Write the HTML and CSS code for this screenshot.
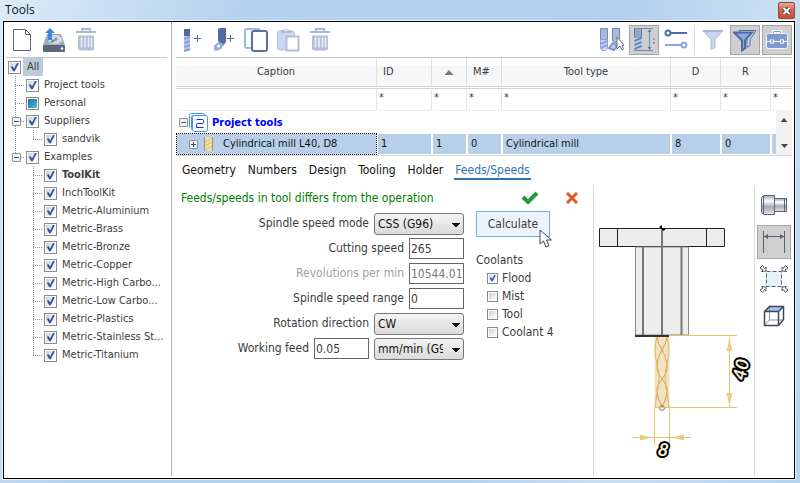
FILE: index.html
```html
<!DOCTYPE html>
<html lang="en">
<head>
    <meta charset="UTF-8">
    <title>Tools</title>
    <link rel="stylesheet" href="styles.css">
</head>
<body>
    <svg width="0" height="0" class="defs" aria-hidden="true">
        <defs>
            <symbol id="trash" viewBox="0 0 24 24">
                <path d="M8 3V1h8v2M2 4h20" fill="none" stroke="#a9b9d6" stroke-width="2"/>
                <path d="M4 7.500h16v13q0 2-2 2H6q-2 0-2-2z" fill="#b2bfda"/>
                <path d="M7.500 9.500v10M11 9.500v10M14.500 9.500v10M17.500 9.500v10" stroke="#e9eef7" stroke-width="1.500"/>
            </symbol>
        </defs>
    </svg>
    <div class="window">
        <div class="title">
            <h1>Tools</h1>
            <button class="close" aria-label="Close"><svg width="9" height="8" viewBox="0 0 9 8"><path d="M1.500 1l6 6M7.500 1l-6 6" stroke="#5b3a3a" stroke-width="4"/><path d="M1.500 1l6 6M7.500 1l-6 6" stroke="#fff" stroke-width="2"/></svg></button>
        </div>
        <div class="client">
            <div class="left">
                <div class="toolbar">
                    <button class="tb" aria-label="New"><svg width="24" height="24" viewBox="0 0 24 24"><path d="M3.500 1.500h12l5 5v16h-17z" fill="#fff" stroke="#5d6577"/><path d="M15.500 1.500v5h5" fill="none" stroke="#5d6577"/></svg></button>
                    <button class="tb" aria-label="Load from disk"><svg width="24" height="24" viewBox="0 0 24 24"><path d="M5 6h14l4 11H1z" fill="#a5acb8"/><ellipse cx="13" cy="11.500" rx="7" ry="4.500" fill="#d5dbe6"/><path d="M9 14l4-2" stroke="#7b8595" stroke-width="2"/><circle cx="14" cy="11" r="1.500" fill="#8c95a5"/><rect x="1" y="17" width="22" height="7" rx="1" fill="#59677f"/><circle cx="20" cy="20.500" r="1.300" fill="#fff"/><path d="M8 0l5 5h-3v7H6V5H3z" fill="#3d86e0"/></svg></button>
                    <button class="tb" aria-label="Delete"><svg width="24" height="24"><use href="#trash"/></svg></button>
                </div>
                <ul class="tree">
                    <li>
                        <label class="row root"><input type="checkbox" checked><span>All</span></label>
                        <ul>
                            <li><label class="row"><input type="checkbox" checked><span>Project tools</span></label></li>
                            <li><label class="row"><input type="checkbox" class="part"><span>Personal</span></label></li>
                            <li>
                                <div class="row open"><button class="exp" aria-label="Collapse Suppliers"></button><label><input type="checkbox" checked><span>Suppliers</span></label></div>
                                <ul>
                                    <li><label class="row"><input type="checkbox" checked><span>sandvik</span></label></li>
                                </ul>
                            </li>
                            <li>
                                <div class="row open"><button class="exp" aria-label="Collapse Examples"></button><label><input type="checkbox" checked><span>Examples</span></label></div>
                                <ul>
                                    <li><label class="row"><input type="checkbox" checked><b>ToolKit</b></label></li>
                                    <li><label class="row"><input type="checkbox" checked><span>InchToolKit</span></label></li>
                                    <li><label class="row"><input type="checkbox" checked><span>Metric-Aluminium</span></label></li>
                                    <li><label class="row"><input type="checkbox" checked><span>Metric-Brass</span></label></li>
                                    <li><label class="row"><input type="checkbox" checked><span>Metric-Bronze</span></label></li>
                                    <li><label class="row"><input type="checkbox" checked><span>Metric-Copper</span></label></li>
                                    <li><label class="row"><input type="checkbox" checked><span>Metric-High Carbo...</span></label></li>
                                    <li><label class="row"><input type="checkbox" checked><span>Metric-Low Carbo...</span></label></li>
                                    <li><label class="row"><input type="checkbox" checked><span>Metric-Plastics</span></label></li>
                                    <li><label class="row"><input type="checkbox" checked><span>Metric-Stainless St...</span></label></li>
                                    <li><label class="row"><input type="checkbox" checked><span>Metric-Titanium</span></label></li>
                                </ul>
                            </li>
                        </ul>
                    </li>
                </ul>
            </div>
            <div class="right">
                <div class="toolbar">
                    <button class="tb" aria-label="Add mill"><svg width="24" height="24" viewBox="0 0 24 24"><path d="M4 1h6v7H4z" fill="#4f6c9c"/><path d="M4 8h6v14l-1 1H5l-1-1z" fill="#c3cff0"/><path d="M4 11l6-2M4 15l6-2M4 19l6-2M4 23l6-2" stroke="#8ea6df" stroke-width="2.500"/><path d="M14 10.500h7M17.500 7v7" stroke="#4f6c9c"/></svg></button>
                    <button class="tb" aria-label="Add turning tool"><svg width="24" height="24" viewBox="0 0 24 24"><path d="M6 1l2-1h6v14l-3 4-5-5z" fill="#4f6c9c"/><path d="M2 18l4-4 6 2-3 5-5 2-2-1z" fill="#93a9e2"/><circle cx="6.500" cy="18" r="1.500" fill="#fff"/><path d="M15 10.500h7M18.500 7v7" stroke="#4f6c9c"/></svg></button>
                    <button class="tb" aria-label="Copy"><svg width="24" height="24" viewBox="0 0 24 24"><rect x="1" y="1" width="15" height="19" rx="2" fill="#fff" stroke="#9db5ea" stroke-width="2"/><rect x="8" y="3" width="15" height="20" rx="2" fill="#fff" stroke="#5672a3" stroke-width="2"/></svg></button>
                    <button class="tb" aria-label="Paste"><svg width="24" height="24" viewBox="0 0 24 24"><rect x="1.500" y="3" width="17" height="19" rx="2" fill="#ccd6ee" stroke="#b4c2de"/><path d="M5 5V2h3q2-3 4 0h3v3z" fill="#aebcd6"/><circle cx="10" cy="2.500" r="1" fill="#fff"/><rect x="10.500" y="8.500" width="12" height="14" fill="#fff" stroke="#b0bfdc" stroke-width="2"/></svg></button>
                    <button class="tb" aria-label="Delete tool"><svg width="24" height="24"><use href="#trash"/></svg></button>
                    <div class="group">
                        <button class="tg" aria-label="Pick tool"><svg width="24" height="24" viewBox="0 0 24 24"><path d="M.5.500h7v11h-7zM12.500.500h7v12l-3 3-4-3z" fill="#aab9d6" stroke="#6f87b3"/><path d="M.5 11.500h7v9l-2 2h-3l-2-2z" fill="#cfd9f3" stroke="#8ba3d8"/><path d="M1 16l6-3M1 20l6-3" stroke="#8ba3d8" stroke-width="2"/><path d="M9 20l4-5 4 3-3 4z" fill="#c6d2f2" stroke="#7f98cf" stroke-width="2"/><path d="M17 9v12l3-3 2 4 1.500-1-1.500-3.500h2.500z" fill="#fff" stroke="#667085"/></svg></button>
                        <button class="tg on" aria-label="Show dimensions"><svg width="24" height="24" viewBox="0 0 24 24"><path d="M2.500.500h7v9h-7z" fill="#93a6cc" stroke="#627aa8"/><path d="M2.500 9.500h7v12h-7z" fill="#b5c4ea"/><path d="M2.500 13l7-3M2.500 17l7-3M2.500 21l7-3" stroke="#627aa8" stroke-width="1.500"/><path d="M2 .5h19M2 22.500h19M17.500 2v19" stroke="#7089b5"/><path d="M17.500 1l2 3h-4zM17.500 22l2-3h-4z" fill="#627aa8"/><path d="M21 10h2v2h-2zM21 14h2v2h-2z" fill="#8fa3c8"/></svg></button>
                        <button class="tg" aria-label="Settings"><svg width="24" height="24" viewBox="0 0 24 24"><path d="M6 5h17" stroke="#4f6fa3" stroke-width="2"/><circle cx="4" cy="5" r="2.500" fill="#fff" stroke="#4f6fa3" stroke-width="2"/><path d="M1 17h17" stroke="#8da6df" stroke-width="2"/><circle cx="20" cy="17" r="2.500" fill="#fff" stroke="#8da6df" stroke-width="2"/></svg></button>
                        <i class="sep"></i>
                        <button class="tg" aria-label="Filter"><svg width="24" height="24" viewBox="0 0 24 24"><path d="M2 2.500h20l-8 9v8l-4 2v-10z" fill="#cbd6ee" stroke="#afbedc"/><path d="M2 3h20" stroke="#a4b5d8" stroke-width="2"/></svg></button>
                        <button class="tg on" aria-label="Filter by operation"><svg width="24" height="24" viewBox="0 0 24 24"><path d="M6 2.500h17l-6 9v6l-3 2v-8z" fill="#d3dcef" stroke="#4f6c9c"/><path d="M1 4.500h18l-7 8v8l-3 2v-10z" fill="#8ea6df" stroke="#4f6c9c" stroke-width="2"/></svg></button>
                        <button class="tg on" aria-label="Toolbox"><svg width="24" height="24" viewBox="0 0 24 24"><path d="M8.500 6V3.500h7V6" fill="none" stroke="#fff" stroke-width="3"/><path d="M8.500 6V3.500h7V6" fill="none" stroke="#7e98cf"/><rect x="1.500" y="5.500" width="21" height="15" rx="2" fill="#8097d2" stroke="#f2f5fc"/><path d="M1 13.500h22" stroke="#fff"/><rect x="5.500" y="12" width="3" height="3" fill="#8097d2" stroke="#fff"/><rect x="15.500" y="12" width="3" height="3" fill="#8097d2" stroke="#fff"/></svg></button>
                    </div>
                </div>
                <div class="grid">
                    <table>
                        <colgroup>
                            <col class="c-cap"><col class="c-id"><col class="c-sm"><col class="c-sm"><col><col class="c-md"><col class="c-md"><col class="c-end">
                        </colgroup>
                        <thead>
                            <tr><th>Caption</th><th class="l">ID</th><th><i class="up" aria-label="Sorted ascending"></i></th><th class="l">M#</th><th>Tool type</th><th>D</th><th>R</th><th></th></tr>
                        </thead>
                        <tbody>
                            <tr class="filter"><td></td><td>*</td><td>*</td><td>*</td><td>*</td><td>*</td><td>*</td><td>*</td></tr>
                            <tr class="section"><td colspan="8"><div class="cell"><button class="exp" aria-label="Collapse Project tools"></button><svg width="19" height="19" viewBox="0 0 19 19"><path d="M.5 14.500V2.500q0-2 2-2h12q1 0 2 2M2.500 16.500V3.500q0-1 1-1h13" fill="none" stroke="#3f9be8"/><rect x="3.500" y="2.500" width="15" height="16" rx="2" fill="#fff" stroke="#3f9be8"/><path d="M7.500 6.500h6q1 0 1 1v2q0 1-1 1h-5q-1 0-1 1v3h7" fill="none" stroke="#1a2ee0"/></svg><b>Project tools</b></div></td></tr>
                            <tr class="sel"><td><div class="cell"><button class="exp plus" aria-label="Expand tool"></button><svg width="9" height="14" viewBox="0 0 9 14"><path d="M0 0h9v14H0z" fill="#f3dba0"/><path d="M1 5l7-4M1 9l7-4M1 13l7-4" stroke="#e4c27c"/><path d="M.5 0v14M8.500 0v14" stroke="#97938b"/></svg><span>Cylindrical mill L40, D8</span></div></td><td>1</td><td>1</td><td>0</td><td>Cylindrical mill</td><td>8</td><td>0</td><td></td></tr>
                        </tbody>
                    </table>
                    <div class="scroll"><i class="up"></i><i class="up down"></i></div>
                </div>
                <nav class="tabs">
                    <a href="#">Geometry</a>
                    <a href="#">Numbers</a>
                    <a href="#">Design</a>
                    <a href="#">Tooling</a>
                    <a href="#">Holder</a>
                    <a href="#" class="active">Feeds/Speeds</a>
                </nav>
                <div class="page">
                    <div class="feeds">
                        <div class="msg">
                            <p>Feeds/speeds in tool differs from the operation</p>
                            <button aria-label="Apply"><svg width="18" height="14" viewBox="0 0 18 14"><path d="M2 6l5 5 9-9" fill="none" stroke="#1f9a3d" stroke-width="4"/></svg></button>
                            <button aria-label="Cancel"><svg width="14" height="14" viewBox="0 0 14 14"><path d="M2 2l10 10M12 2L2 12" stroke="#e2562a" stroke-width="3"/></svg></button>
                        </div>
                        <div class="body">
                            <div class="form">
                                <div class="f"><label for="mode">Spindle speed mode</label><select id="mode"><option>CSS (G96)</option></select></div>
                                <div class="f"><label for="cut">Cutting speed</label><input id="cut" type="text" value="265"></div>
                                <div class="f"><label for="rpm" class="off">Revolutions per min</label><input id="rpm" type="text" value="10544.01" readonly></div>
                                <div class="f"><label for="range">Spindle speed range</label><input id="range" type="text" value="0"></div>
                                <div class="f"><label for="dir">Rotation direction</label><select id="dir"><option>CW</option></select></div>
                                <div class="f"><label for="feed">Working feed</label><input id="feed" type="text" value="0.05"><select aria-label="Feed unit"><option>mm/min (G94)</option></select></div>
                            </div>
                            <div class="side">
                                <button class="calc">Calculate<svg class="cursor" width="13" height="19" viewBox="0 0 13 19"><path d="M1 1v14l3.500-3 2.500 6 3-1.500-2.500-5.500h5z" fill="#fff" stroke="#3c4454"/></svg></button>
                                <fieldset>
                                    <legend>Coolants</legend>
                                    <label><input type="checkbox" checked>Flood</label>
                                    <label><input type="checkbox">Mist</label>
                                    <label><input type="checkbox">Tool</label>
                                    <label><input type="checkbox">Coolant 4</label>
                                </fieldset>
                            </div>
                        </div>
                    </div>
                    <div class="view">
                        <svg width="156" height="280" viewBox="596 187 156 280">
                            <!-- holder -->
                            <path d="M599.500 228.500h125v18h-125z" fill="#ededed" stroke="#222"/>
                            <path d="M617.500 228v18M706.500 228v18" stroke="#222"/>
                            <path d="M635.500 247h53v88h-53z" fill="#ededed" stroke="#888"/>
                            <path d="M643 247v88M662 229v106M681.500 247v88" stroke="#777" stroke-width="2"/>
                            <path d="M635 335.500h54" stroke="#333"/>
                            <path d="M635 336h34" stroke="#333" stroke-width="2"/>
                            <path d="M659 227l3-2v3h3v2l-2 1-1-2z" fill="#000"/>
                            <!-- cutter -->
                            <path d="M654.500 337h15v71h-15z" fill="#f1e2c6"/>
                            <path d="M657 337q1 7 5 13t5 14-5 15-5 14 5 14M667 337q-1 7-5 13t-5 14 5 15 5 14-5 14" fill="none" stroke="#d9a53c"/>
                            <path d="M657 337q-4 13 0 27t0 29l-2 14M667 337q4 13 0 27t0 29l2 14" fill="none" stroke="#e0b65c"/>
                            <circle cx="662" cy="408" r="2.500" fill="none" stroke="#777"/>
                            <!-- dimensions -->
                            <g fill="none" stroke="#e0c56f">
                                <path d="M669 335.500h68M655 407.500h82M729.500 337v70M654.500 408v38M669.500 408v38M633 437.500h58"/>
                            </g>
                            <path d="M729.500 338l3 13h-6zM729.500 406l3-13h-6zM652 437.500l-12-3v6zM672 437.500l12-3v6z" fill="#e6cd80"/>
                            <text class="dim" transform="translate(745 381) rotate(-78)">40</text>
                            <text class="dim" transform="translate(657 455) rotate(10)">8</text>
                        </svg>
                    </div>
                    <div class="tools">
                        <button aria-label="Show holder"><svg width="28" height="22" viewBox="0 0 28 22"><defs><linearGradient id="m" x2="0" y2="1"><stop offset="0" stop-color="#a5a9b4"/><stop offset=".3" stop-color="#fff"/><stop offset=".6" stop-color="#a5a9b4"/><stop offset="1" stop-color="#e6e7ec"/></linearGradient></defs><g fill="url(#m)" stroke="#5b6273"><path d="M14.500 4.500h12v13h-12z"/><path d="M3.500 1.500h11v19h-11l-2-2v-15z"/></g><path d="M3.500 2v18M24.500 5v12" stroke="#5b6273"/></svg></button>
                        <button class="on" aria-label="Show dimensions in view"><svg width="24" height="24" viewBox="0 0 24 24"><path d="M1.500 1v22M22.500 1v22M2 6.500h20" stroke="#596174"/><path d="M2 6.500l4-2.500v5zM22 6.500l-4-2.500v5z" fill="#596174"/></svg></button>
                        <button aria-label="Fit to view"><svg width="28" height="28" viewBox="0 0 28 28"><path d="M6 6h16v16H6z" fill="#e5f3f9"/><path d="M6.500 6.500h15v15h-15z" fill="none" stroke="#566277" stroke-dasharray="4 2"/><g fill="#fff" stroke="#4d5566"><path d="M6 6V2L4.500 3.500 2.500.500 0 3l3 2L1.500 6.500zM22 6V2l1.500 1.500 2-3L28 3l-3 2 1.500 1.500zM6 22v4l-1.500-1.500-2 3L0 25l3-2-1.500-1.500zM22 22v4l1.500-1.500 2 3L28 25l-3-2 1.500-1.500z"/></g></svg></button>
                        <button aria-label="Isometric view"><svg width="22" height="22" viewBox="0 0 22 22"><path d="M1.500 6.500l5-5h14l-5 5z" fill="#a3c3f5"/><path d="M6.500 2v13h14M6.500 15l-5 5" fill="none" stroke="#8a8f9b"/><path d="M1.500 6.500l5-5h14v13l-5 6h-14zM1.500 6.500h14v14M15.500 6.500l5-5" fill="none" stroke="#3f4757" stroke-width="1.500"/></svg></button>
                    </div>
                </div>
            </div>
        </div>
    </div>
</body>
</html>
```
FILE: styles.css
```css
*{
    box-sizing: border-box;
    padding: 0;
    margin: 0;
}
body{
    font: 11px/18px Tahoma, "DejaVu Sans Condensed", "Noto Sans", sans-serif;
    color: #3c3c3c;
}
ul{
    list-style: none;
}
button, input, select{
    font: inherit;
    color: inherit;
}
button{
    display: flex;
    align-items: center;
    justify-content: center;
    border: none;
    background: none;
}
svg{
    flex: none;
}
.defs{
    position: absolute;
}
.window{
    display: flex;
    flex-direction: column;
    min-height: 100vh;
    padding: 0 5px 4px 3px;
    background: linear-gradient(110deg, #dcebf8 0, #b5d2ee 25%, #b3d1ee 65%, #c9dff3 80%, #b5d3ef 100%);
}
.title{
    display: flex;
    justify-content: space-between;
    height: 21px;
}
.title h1{
    padding-left: 2px;
    font: 12px/20px "Open Sans", "Noto Sans", sans-serif;
    color: #111;
}
.close{
    width: 17px;
    height: 17px;
    margin-top: 2px;
    border: 1px solid #8c4a44;
    border-radius: 2px;
    background: linear-gradient(#e9a898, #d9614a 50%, #cf4e33);
}
.client{
    flex: 1;
    display: flex;
    border: 1px solid #000;
    box-shadow: 0 0 0 1px #e8f2fb;
    background: #fff;
}
.left{
    width: 168px;
    margin: 0 0 2px;
    padding: 0 4px 0 2px;
    border-right: 1px solid #b4b4b4;
}
.right{
    flex: 1;
    display: flex;
    flex-direction: column;
    min-width: 0;
    padding: 0 2px 0 4px;
}
.toolbar{
    display: flex;
    align-items: center;
    gap: 8px;
    height: 36px;
    padding: 0 4px;
    border-bottom: 1px solid #c8c8c8;
}
.tb{
    width: 24px;
    height: 24px;
}
.group{
    display: flex;
    align-items: center;
    gap: 2px;
    margin: 0 -4px 0 auto;
}
.tg{
    width: 30px;
    height: 30px;
}
.on{
    border: 1px solid #a5a5a5;
    background: #cfcfcf;
}
.sep{
    width: 1px;
    height: 30px;
    margin: 0 1px;
    background: #dcdcdc;
}

/* check boxes */
input[type=checkbox]{
    appearance: none;
    flex: none;
    display: flex;
    width: 13px;
    height: 13px;
    padding: 1px;
    border: 1px solid #8b8b8b;
    background: linear-gradient(135deg, #cdd2da, #fff) content-box;
}
input[type=checkbox]:checked::before{
    content: "";
    flex: 1;
    background: #33529f;
    clip-path: polygon(8% 48%, 30% 42%, 45% 66%, 78% 5%, 98% 8%, 52% 96%, 36% 96%);
}
input.part{
    background: linear-gradient(135deg, #1a6f9a, #4fc0e0) content-box;
}

/* tree */
.tree{
    padding-left: 2px;
}
.row, .row label{
    display: flex;
    align-items: center;
    white-space: nowrap;
}
.row{
    height: 18px;
}
.row input{
    margin-right: 5px;
}
.root input{
    margin-right: 2px;
}
.root span{
    padding: 0 4px;
    background: #bccad9;
}
.tree li li{
    padding-left: 7px;
    background: repeating-linear-gradient(#999 0 1px, transparent 1px 2px) 7px 0 / 1px 100% no-repeat;
}
.tree li li:last-child{
    background-size: 1px 9px;
}
.tree li li .row{
    padding-left: 11px;
    background: repeating-linear-gradient(90deg, #999 0 1px, transparent 1px 2px) 0 9px / 10px 1px no-repeat;
}
.tree li li .open{
    padding-left: 0;
}
.tree li li li{
    margin-left: 11px;
}
.exp{
    flex: none;
    width: 9px;
    height: 9px;
    border: 1px solid #8f8f8f;
    border-radius: 1px;
    background: linear-gradient(#33529f, #33529f) center / 5px 1px no-repeat, #f4f4f4;
}
.plus{
    background: linear-gradient(#33529f, #33529f) center / 5px 1px no-repeat, linear-gradient(#33529f, #33529f) center / 1px 5px no-repeat, #f4f4f4;
}
.open .exp{
    margin: 0 5px 0 -3px;
}

/* tool list */
.grid{
    position: relative;
    border-bottom: 1px solid #d8d8d8;
}
table{
    width: 100%;
    table-layout: fixed;
    border-collapse: separate;
    border-spacing: 0;
}
.c-cap{
    width: 201px;
}
.c-id{
    width: 55px;
}
.c-sm{
    width: 35px;
}
.c-md{
    width: 50px;
}
.c-end{
    width: 21px;
}
th{
    height: 31px;
    border-right: 1px solid #dedede;
    border-bottom: 3px double #d2d2d2;
    background: linear-gradient(#fff 30%, #f4f5f6 30%, #f9f9fa);
    font-weight: normal;
}
th.l{
    padding-left: 6px;
    text-align: left;
}
td{
    height: 22px;
    padding: 0 2px;
    border: 1px solid #fff;
    border-width: 1px 1px 0;
    white-space: nowrap;
}
.filter td{
    padding: 0 1px;
    border-right-color: #e6e6e6;
    border-bottom: 1px solid #efefef;
    line-height: 16px;
    vertical-align: top;
}
th:last-child, .filter td:last-child{
    border-right: none;
}
.cell{
    display: flex;
    align-items: center;
}
.section b{
    margin-left: 4px;
    color: #00f;
}
.section .exp{
    margin-right: 1px;
}
.sel td{
    padding: 0 3px;
    border-width: 1px;
    background: #b8cfea;
    background-clip: padding-box;
    color: #111;
}
.sel td:first-child{
    padding-left: 12px;
    border: 1px dotted #000;
}
.sel svg{
    margin: 0 10px 0 6px;
}
.up{
    display: inline-block;
    width: 9px;
    height: 5px;
    background: #777;
    clip-path: polygon(50% 0, 100% 100%, 0 100%);
}
.down{
    transform: rotate(180deg);
}
.scroll{
    position: absolute;
    right: 0;
    bottom: 0;
    display: flex;
    flex-direction: column;
    align-items: center;
    justify-content: space-between;
    width: 16px;
    height: 44px;
    padding: 7px 0;
    background: #f1f1f1;
}
.scroll .up{
    width: 7px;
    height: 4px;
    background: #444;
}

/* tabs */
.tabs{
    display: flex;
    gap: 10px;
    height: 24px;
    padding: 4px 5px 0;
    font-size: 12px;
}
.tabs a{
    height: 20px;
    padding: 0 1px;
    line-height: 20px;
    color: #111;
    text-decoration: none;
}
.tabs .active{
    border-bottom: 2px solid #2f74b5;
    color: #2f74b5;
}
.page{
    flex: 1;
    display: flex;
    padding: 5px 0 2px;
    font-size: 12px;
}
.feeds{
    width: 418px;
    padding-left: 5px;
    border-right: 1px solid #d8d8d8;
}
.msg{
    display: flex;
    align-items: center;
    gap: 26px;
    height: 26px;
    padding-right: 14px;
}
.msg p{
    flex: 1;
    color: #008000;
    white-space: nowrap;
}
.body{
    display: flex;
    gap: 12px;
}
.form{
    display: flex;
    flex-direction: column;
    gap: 3px;
    width: 283px;
    padding-top: 2px;
}
.f{
    display: flex;
    justify-content: flex-end;
    gap: 5px;
    height: 22px;
}
.f label{
    line-height: 20px;
}
.off{
    color: #a0a0a0;
}
.f input{
    width: 55px;
    height: 21px;
    padding: 0 1px;
    border: 1px solid #666;
    background: #fff;
}
.f input[readonly]{
    color: #777;
}
.f select{
    appearance: none;
    width: 90px;
    height: 22px;
    padding: 0 20px 0 3px;
    border: 1px solid #777;
    border-radius: 3px;
    background: linear-gradient(45deg, transparent 50%, #111 50%) 77px 9px / 4px 4px no-repeat, linear-gradient(-45deg, transparent 50%, #111 50%) 81px 9px / 4px 4px no-repeat, linear-gradient(#f4f4f4, #dadada);
    color: #111;
}
.calc{
    position: relative;
    width: 74px;
    height: 26px;
    border: 1px solid #6cb2e6;
    background: #edf3fb;
}
.cursor{
    position: absolute;
    left: 62px;
    top: 17px;
}
fieldset{
    padding-top: 14px;
    border: none;
}
legend{
    float: left;
    width: 100%;
}
fieldset label{
    display: flex;
    align-items: center;
    gap: 4px;
    height: 18px;
    padding-left: 11px;
    clear: both;
}
fieldset input[type=checkbox]{
    width: 11px;
    height: 11px;
}
.view{
    flex: 1;
    padding: 2px 0;
    text-align: center;
}
.view svg{
    overflow: visible;
}
.dim{
    font: italic bold 18px "Lato", sans-serif;
    fill: #fdf0d8;
    stroke: #000;
    stroke-width: 4px;
    stroke-linejoin: round;
    paint-order: stroke;
}
.tools{
    display: flex;
    flex-direction: column;
    gap: 3px;
    width: 38px;
    margin-top: 2px;
    padding: 1px 1px 0 2px;
    border-left: 1px solid #d8d8d8;
}
.tools button{
    width: 34px;
    height: 34px;
}
```
